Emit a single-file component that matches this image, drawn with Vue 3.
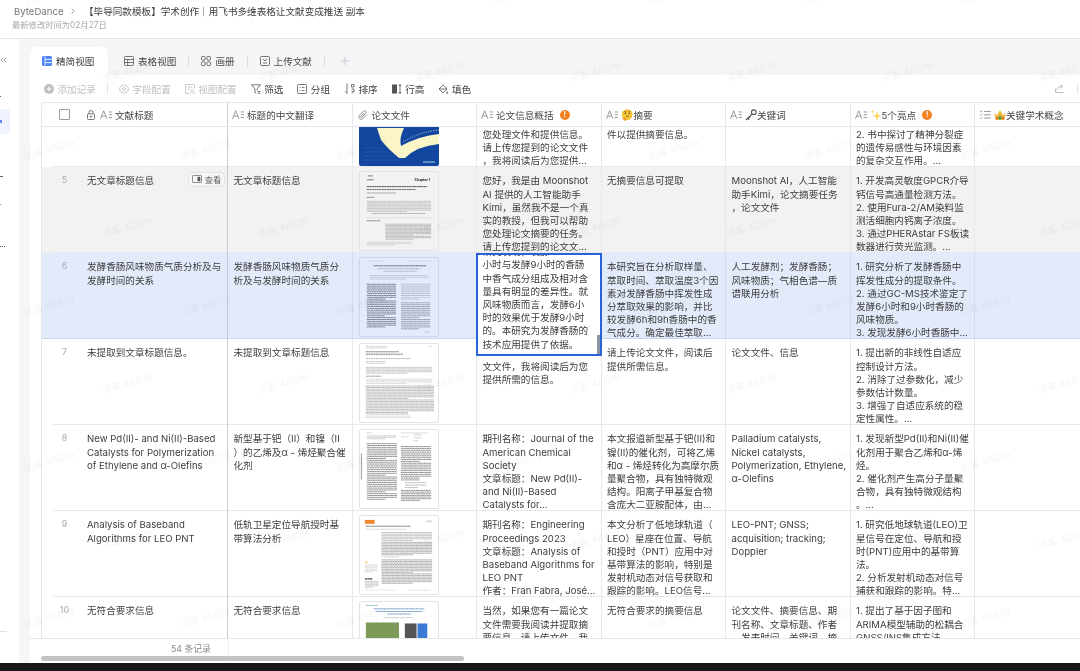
<script setup>
const marks = []
for (let r = 0; r < 9; r++) {
  const y = -7 + r * 78
  for (let x = r % 2 ? 127 : 49; x < 1120; x += 156) marks.push({ x, y })
}

const blocks = (list) => {
  const out = []
  list.forEach(([x, y, w, n, step, c, sw]) => {
    for (let i = 0; i < n; i++) {
      const short = n > 2 && (i === n - 1 || i % 9 === 8)
      out.push({ x1: x, x2: x + (short ? w * 0.62 : w), y: y + i * step, c, sw: sw * 0.85, off: (i * 1.37) % 2.6 })
    }
  })
  return out
}

const editorText = '研究发现，发酵6\n小时与发酵9小时的香肠\n中香气成分组成及相对含\n量具有明显的差异性。就\n风味物质而言，发酵6小\n时的效果优于发酵9小时\n的。本研究为发酵香肠的\n技术应用提供了依据。'

const rows = [
  { no: '', title: '', zh: '', kind: 'cover', info: '\n\n\n您处理文件和提供信息。\n请上传您提到的论文文件\n，我将阅读后为您提供...', abs: '\n\n\n件以提供摘要信息。', key: '', pts: '\n\n\n2. 书中探讨了精神分裂症\n的遗传易感性与环境因素\n的复杂交互作用。...', lines: [] },
  { no: 5, cls: 'hover', title: '无文章标题信息', zh: '无文章标题信息', kind: 'chapter', info: '您好，我是由 Moonshot\nAI 提供的人工智能助手\nKimi，虽然我不是一个真\n实的教授，但我可以帮助\n您处理论文摘要的任务。\n请上传您提到的论文文...', abs: '无摘要信息可提取', key: 'Moonshot AI，人工智能\n助手Kimi，论文摘要任务\n，论文文件', pts: '1. 开发高灵敏度GPCR介导\n钙信号高通量检测方法。\n2. 使用Fura-2/AM染料监\n测活细胞内钙离子浓度。\n3. 通过PHERAstar FS板读\n数器进行荧光监测。...',
    lines: blocks([[7, 15, 62, 1, 1.8, '#222', 1.1], [7, 18, 50, 1, 1.8, '#333', 1], [7, 21.5, 30, 1, 1.8, '#555', .7], [7, 26, 8, 1, 1.8, '#333', .8], [7, 30, 66, 8, 1.5, '#8a8a8a', .65], [12, 42.5, 55, 1, 1.8, '#555', .6], [7, 47, 66, 1, 1.8, '#aaa', .4], [7, 50, 14, 1, 1.8, '#333', .8], [26, 53.5, 47, 12, 1.4, '#777', .65], [7, 72, 46, 3, 1.4, '#99a', .5]]) },
  { no: 6, cls: 'sel', title: '发酵香肠风味物质气质分析及与\n发酵时间的关系', zh: '发酵香肠风味物质气质分\n析及与发酵时间的关系', kind: 'paper', active: true, info: '', abs: '本研究旨在分析取样量、\n萃取时间、萃取温度3个因\n素对发酵香肠中挥发性成\n分萃取效果的影响，并比\n较发酵6h和9h香肠中的香\n气成分。确定最佳萃取...', key: '人工发酵剂；发酵香肠；\n风味物质；气相色谱—质\n谱联用分析', pts: '1. 研究分析了发酵香肠中\n挥发性成分的提取条件。\n2. 通过GC-MS技术鉴定了\n发酵6小时和9小时香肠的\n风味物质。\n3. 发现发酵6小时香肠中...',
    lines: blocks([[8, 3, 16, 1, 1, '#aab', .5], [50, 3, 24, 1, 1, '#aab', .5], [14, 8, 54, 1, 1, '#334', 1], [18, 11, 44, 1, 1, '#667', .6], [24, 13.5, 34, 1, 1, '#667', .6], [10, 18, 60, 3, 1.8, '#889', .55], [7, 27, 30, 24, 1.9, '#334', .85], [42, 27, 30, 9, 1.9, '#778', .6], [42, 46, 30, 15, 1.9, '#556', .75], [66, 76, 6, 1, 1, '#889', .5]]) },
  { no: 7, title: '未提取到文章标题信息。', zh: '未提取到文章标题信息', kind: 'article', info: '\n文文件，我将阅读后为您\n提供所需的信息。', abs: '请上传论文文件，阅读后\n提供所需信息。', key: '论文文件、信息', pts: '1. 提出新的非线性自适应\n控制设计方法。\n2. 消除了过参数化，减少\n参数估计数量。\n3. 增强了自适应系统的稳\n定性属性。...',
    lines: blocks([[6, 2.5, 22, 2, 1.6, '#888', .5], [70, 2.5, 4, 1, 1, '#888', .5], [6, 8, 34, 1, 1, '#333', .9], [6, 10.5, 38, 1, 1, '#333', .9], [6, 15, 46, 1, 1, '#666', .6], [6, 18, 20, 2, 1.7, '#777', .5], [6, 24, 68, 5, 1.5, '#777', .6], [6, 33, 16, 1, 1, '#333', .7], [6, 36, 68, 4, 1.5, '#999', .5], [6, 43, 70, 19, 1.6, '#666', .65], [6, 74, 46, 2, 1.5, '#999', .5]]) },
  { no: 8, title: 'New Pd(II)- and Ni(II)-Based\nCatalysts for Polymerization\nof Ethylene and α-Olefins', zh: '新型基于钯（II）和镍（II\n）的乙烯及α - 烯烃聚合催\n化剂', kind: 'chem', info: '期刊名称：Journal of the\nAmerican Chemical\nSociety\n文章标题：New Pd(II)-\nand Ni(II)-Based\nCatalysts for...', abs: '本文报道新型基于钯(II)和\n镍(II)的催化剂，可将乙烯\n和α - 烯烃转化为高摩尔质\n量聚合物，具有独特微观\n结构。阳离子甲基复合物\n含庞大二亚胺配体，由...', key: 'Palladium catalysts,\nNickel catalysts,\nPolymerization, Ethylene,\nα-Olefins', pts: '1. 发现新型Pd(II)和Ni(II)催\n化剂用于聚合乙烯和α-烯\n烃。\n2. 催化剂产生高分子量聚\n合物，具有独特微观结构\n。...',
    lines: blocks([[7, 3, 5, 1, 1, '#777', .5], [42, 3, 28, 1, 1, '#888', .5], [7, 6, 30, 3, 1.5, '#777', .55], [7, 14, 31, 31, 1.9, '#444', .85], [42, 17, 31, 19, 1.9, '#444', .85], [42, 62, 31, 7, 1.7, '#444', .8], [42, 7, 8, 1, 1, '#888', .5], [55, 5, 8, 3, 3, '#888', .6], [46, 54, 22, 3, 2.5, '#777', .7]]) },
  { no: 9, title: 'Analysis of Baseband\nAlgorithms for LEO PNT', zh: '低轨卫星定位导航授时基\n带算法分析', kind: 'proc', info: '期刊名称：Engineering\nProceedings 2023\n文章标题：Analysis of\nBaseband Algorithms for\nLEO PNT\n作者：Fran Fabra, José...', abs: '本文分析了低地球轨道（\nLEO）星座在位置、导航\n和授时（PNT）应用中对\n基带算法的影响，特别是\n发射机动态对信号获取和\n跟踪的影响。LEO信号...', key: 'LEO-PNT; GNSS;\nacquisition; tracking;\nDoppler', pts: '1. 研究低地球轨道(LEO)卫\n星信号在定位、导航和授\n时(PNT)应用中的基带算\n法。\n2. 分析发射机动态对信号\n捕获和跟踪的影响。特...',
    lines: blocks([[68, 5, 6, 2, 1, '#99a', .6], [6, 10.5, 46, 1, 1, '#333', .9], [6, 13.5, 42, 1, 1, '#888', .5], [22, 17, 52, 6, 1.6, '#666', .6], [22, 27, 52, 9, 1.6, '#555', .7], [22, 42, 18, 1, 1, '#888', .5], [22, 45, 52, 16, 1.6, '#555', .7], [5, 50, 13, 6, 1.5, '#999', .5], [5, 64.5, 8, 1, 1, '#222', 1.6], [5, 67, 14, 5, 1.5, '#777', .6], [6, 76, 30, 1, 1, '#aaa', .5], [50, 76, 22, 1, 1, '#aaa', .5]]) },
  { no: 10, title: '无符合要求信息', zh: '无符合要求信息', kind: 'loose', info: '当然，如果您有一篇论文\n文件需要我阅读并提取摘\n要信息，请上传文件，我', abs: '无符合要求的摘要信息', key: '论文文件、摘要信息、期\n刊名称、文章标题、作者\n、发表时间、关键词、摘', pts: '1. 提出了基于因子图和\nARIMA模型辅助的松耦合\nGNSS/INS集成方法',
    lines: blocks([[6, 3.5, 12, 1, 1, '#3a9a7a', .8], [14, 7, 52, 1, 1, '#3f78b8', 1], [16, 9.7, 48, 1, 1, '#3f78b8', 1], [28, 12.3, 24, 1, 1, '#3f78b8', 1], [24, 16, 30, 1, 1, '#888', .6]]) },
]
</script>

<template>
  <div class="page">
    <header class="top">
      <div class="crumb">
        <span class="org">ByteDance</span>
        <svg class="chev" viewBox="0 0 4 6"><path d="M.7.6 3.2 3 .7 5.4" /></svg>
        <span class="doc">【毕导同款模板】学术创作｜用飞书多维表格让文献变成推送 副本</span>
      </div>
      <div class="sub">最新修改时间为02月27日</div>
    </header>

    <div class="body">
      <aside class="rail">
        <svg class="rail-back" viewBox="0 0 7 6"><path d="M3.2.6.8 3l2.4 2.4M6.4.6 4 3l2.4 2.4" /></svg>
        <i class="rail-dot d1"></i>
        <div class="rail-on"><i></i></div>
        <i class="rail-dot d2"></i>
        <i class="rail-dot d3"></i>
        <i class="rail-dot d4"></i>
        <i class="rail-line"></i>
      </aside>
      <div class="gutter"></div>

      <main class="main">
        <nav class="tabs">
          <div class="tab active">
            <svg class="ic" viewBox="0 0 10 10"><rect x="0" y="0" width="10" height="10" rx="1.5" fill="#4e83fd" /><path d="M3 .5v9M3.6 3.4h6M3.6 6.6h6" stroke="#fff" stroke-width=".9" fill="none" /></svg>
            <span>精简视图</span>
          </div>
          <div class="tab first">
            <svg class="ic line" viewBox="0 0 10 10"><rect x=".5" y=".5" width="9" height="9" rx="1" /><path d="M.5 3.5h9M.5 6.5h9M3.7 3.5v6" /></svg>
            <span>表格视图</span>
          </div>
          <i class="vbar"></i>
          <div class="tab">
            <svg class="ic line" viewBox="0 0 10 10"><rect x=".5" y=".5" width="3.6" height="3.6" rx=".8" /><rect x="5.9" y=".5" width="3.6" height="3.6" rx=".8" /><rect x=".5" y="5.9" width="3.6" height="3.6" rx=".8" /><rect x="5.9" y="5.9" width="3.6" height="3.6" rx=".8" /></svg>
            <span>画册</span>
          </div>
          <i class="vbar"></i>
          <div class="tab">
            <svg class="ic line" viewBox="0 0 10 10"><rect x=".5" y=".5" width="9" height="9" rx="1" /><path d="M3 3l2 2 2-2M3 7h4" /></svg>
            <span>上传文献</span>
          </div>
          <i class="vbar"></i>
          <svg class="plus" viewBox="0 0 9 9"><path d="M4.5 0v9M0 4.5h9" /></svg>
        </nav>

        <div class="toolbar">
          <div class="tool off">
            <svg class="ic" viewBox="0 0 10 10"><circle cx="5" cy="5" r="5" fill="#bcbfc4" /><path d="M5 2.5v5M2.5 5h5" stroke="#fff" stroke-width="1" /></svg>
            <span>添加记录</span>
          </div>
          <i class="tbar"></i>
          <div class="tool off">
            <svg class="ic line" viewBox="0 0 10 10"><path d="M5 .5l1 1.2 1.6-.3.5 1.5 1.4.8-.5 1.3.5 1.3-1.4.8-.5 1.5L6 8.3 5 9.5 4 8.3l-1.6.3-.5-1.5L.5 6.3 1 5 .5 3.700l1.400-.8.5-1.500L4 1.700z" /><circle cx="5" cy="5" r="1.500" /></svg>
            <span>字段配置</span>
          </div>
          <div class="tool off">
            <svg class="ic line" viewBox="0 0 10 10"><path d="M9.500 4.500v-4h-9v9h4M2.500 3h5M2.500 5.200h2.500" /><circle cx="7.500" cy="7.500" r="1.500" /><path d="M8.600 8.600 9.700 9.700" /></svg>
            <span>视图配置</span>
          </div>
          <div class="tool">
            <svg class="ic line" viewBox="0 0 10 10"><path d="M.5.800h9L6 5v1.200M.5.800 4 5v4l1-.6M6.500 7.500h3M6.500 9.200h3" /></svg>
            <span>筛选</span>
          </div>
          <div class="tool">
            <svg class="ic line" viewBox="0 0 10 10"><rect x=".5" y=".5" width="9" height="9" rx="1" /><path d="M2.500 3.500h1M5 3.500h2.500M2.500 6.500h1M5 6.500h2.500" /></svg>
            <span>分组</span>
          </div>
          <div class="tool">
            <svg class="ic wide line" viewBox="0 0 11 11"><path d="M3 .5v10M3 10.500 1 8.500M7.500 1.500h2.500v2.500h-2.500zM7.500 6h2.500v2.500l-2 2M7.500 8.500h2.500" /></svg>
            <span>排序</span>
          </div>
          <div class="tool">
            <svg class="ic line" viewBox="0 0 10 10"><rect x="0" y=".5" width="5" height="9" fill="#555" stroke="none" /><path d="M8 .5v9M6.600 2 8 .5 9.400 2M6.600 8 8 9.500 9.400 8" /></svg>
            <span>行高</span>
          </div>
          <div class="tool">
            <svg class="ic line" viewBox="0 0 10 10"><path d="M5 .8 9 5 5 8.800 1 5zM1 5h8" /><path d="M9.300 7.500q-.7 1-.7 1.400a.7.7 0 0 0 1.400 0q0-.4-.7-1.400z" /></svg>
            <span>填色</span>
          </div>
          <div class="tool-end">
            <svg class="share" viewBox="0 0 9 9"><path d="M.5 4.500v4h8M1.800 6.200C2.200 3.500 4 2.500 6.500 2.500M5.200.5l2.500 2L5.200 4.500" /></svg>
            <i class="tbar"></i>
          </div>
        </div>

        <section class="table">
          <div class="thead grid">
            <div class="th frozen">
              <i class="check"></i>
              <svg class="lock" viewBox="0 0 8 10"><rect x=".5" y="3.800" width="7" height="5.700" rx="1" /><path d="M2 3.800V2.500a2 2 0 0 1 4 0v1.300" /><circle cx="4" cy="6.600" r=".7" /></svg>
              <svg class="ta" viewBox="0 0 13 10"><path d="M.5 9.500 4 .7l3.500 8.800M1.700 6.500h4.600M9.500 2H13M9.500 5H13M9.500 8H13" /></svg>
              <span>文献标题</span>
            </div>
            <div class="th">
              <svg class="ta" viewBox="0 0 13 10"><path d="M.5 9.500 4 .7l3.500 8.800M1.700 6.500h4.600M9.500 2H13M9.500 5H13M9.500 8H13" /></svg>
              <span>标题的中文翻译</span>
            </div>
            <div class="th">
              <svg class="ta clip" viewBox="0 0 10 10"><path d="M8.800 4.700 4.900 8.600a2.400 2.400 0 0 1-3.400-3.400l4-4a1.500 1.500 0 0 1 2.200 2.200l-3.900 3.900a.6.6 0 0 1-.9-.9l3.500-3.500" /></svg>
              <span>论文文件</span>
            </div>
            <div class="th">
              <svg class="ta" viewBox="0 0 13 10"><path d="M.5 9.500 4 .7l3.500 8.800M1.700 6.500h4.600M9.500 2H13M9.500 5H13M9.500 8H13" /></svg>
              <span>论文信息概括</span>
              <i class="warn">!</i>
            </div>
            <div class="th">
              <svg class="ta" viewBox="0 0 13 10"><path d="M.5 9.500 4 .7l3.500 8.800M1.700 6.500h4.600M9.500 2H13M9.500 5H13M9.500 8H13" /></svg>
              <svg class="emoji" viewBox="0 0 12 12"><circle cx="6.200" cy="5.600" r="5.400" fill="#f8c438" /><circle cx="4.300" cy="4.300" r=".8" fill="#5b3a12" /><circle cx="8.200" cy="4.300" r=".8" fill="#5b3a12" /><path d="M3.500 2.600l1.600-.5M7.400 2.100l1.700.5M5 7.500l3-.5" stroke="#5b3a12" stroke-width=".6" fill="none" /><path d="M1.500 9.200 5.200 8.800 5 11.600 2.800 11.800z" fill="#e99a22" /></svg>
              <span>摘要</span>
            </div>
            <div class="th">
              <svg class="ta" viewBox="0 0 13 10"><path d="M.5 9.500 4 .7l3.500 8.800M1.700 6.500h4.600M9.500 2H13M9.500 5H13M9.500 8H13" /></svg>
              <svg class="emoji tight" viewBox="0 0 12 12"><circle cx="8.800" cy="3.200" r="2.300" fill="none" stroke="#555" stroke-width="1.100" /><path d="M7.200 4.800 1 11M2.800 9.200l1.400 1.400M4.300 7.700l1 1" stroke="#444" stroke-width="1.100" fill="none" /></svg>
              <span>关键词</span>
            </div>
            <div class="th">
              <svg class="ta" viewBox="0 0 13 10"><path d="M.5 9.500 4 .7l3.500 8.800M1.700 6.500h4.600M9.500 2H13M9.500 5H13M9.500 8H13" /></svg>
              <svg class="emoji tight" viewBox="0 0 12 12"><path d="M7 2 8.200 6 11.800 7 8.200 8 7 12 5.800 8 2.200 7 5.800 6z" fill="#fbd662" /><path d="M2.500 .5 3 2.200 4.700 2.700 3 3.200 2.500 4.900 2 3.200.3 2.700 2 2.200z" fill="#fbd662" /></svg>
              <span>5个亮点</span>
              <i class="warn">!</i>
            </div>
            <div class="th last">
              <svg class="ta list" viewBox="0 0 11 10"><path d="M0 1.500l.8.600L2 .8M0 5l.8.600L2 4.300M0 8.500l.8.600L2 7.800M4 1.500h7M4 5h7M4 8.500h7" /></svg>
              <svg class="emoji tight" viewBox="0 0 12 12"><path d="M.5 4 3 6.500 6 1l3 5.500L11.500 4 10.500 11h-9z" fill="#eeb32f" /><circle cx="6" cy="8.800" r="1.600" fill="#2e9a5c" /><circle cx="3" cy="9.200" r=".9" fill="#d9483b" /><circle cx="9" cy="9.200" r=".9" fill="#d9483b" /></svg>
              <span>关键学术概念</span>
            </div>
          </div>

          <div class="tbody">
            <div v-for="(r, i) in rows" :key="i" class="row grid" :class="r.cls">
              <div class="td frozen lead">
                <span class="no">{{ r.no }}</span>
                <span class="txt">{{ r.title }}</span>
                <div v-if="r.cls === 'hover'" class="peek">
                  <svg viewBox="0 0 10 8"><rect x=".4" y=".4" width="9.200" height="7.200" rx="1" fill="none" stroke="#666" stroke-width=".8" /><rect x="5.500" y="1.800" width="2.800" height="4.400" fill="#555" /></svg>
                  <span>查看</span>
                </div>
              </div>
              <div class="td"><span class="txt">{{ r.zh }}</span></div>
              <div class="td thumbcell">
                <svg class="thumb" :class="{ full: r.kind === 'cover' }" viewBox="0 0 80 80">
                  <template v-if="r.kind === 'cover'">
                    <rect width="80" height="80" fill="#13479f" />
                    <path d="M18 42H45Q40 52 42 60 60 50 80 48V58Q58 60 46 72H40Q28 62 22 54Z" fill="#fbf6c8" />
                    <path d="M44 56Q60 46 80 44" fill="none" stroke="#fff" stroke-width=".8" stroke-dasharray="1 1.500" />
                    <path d="M4 62h20M4 66h26M4 70h32M4 74h40" stroke="#3c6dbc" stroke-width=".7" stroke-dasharray="1 1" />
                    <path d="M64 76h12" stroke="#cfe" stroke-width=".8" />
                  </template>
                  <template v-if="r.kind === 'chapter'">
                    <path d="M8 4h5M7 8h7" stroke="#777" stroke-width="1" />
                    <text x="56" y="9" class="chap">Chapter 1</text>
                  </template>
                  <template v-if="r.kind === 'chem'">
                    <path d="M1.500 24v27" stroke="#aaa" stroke-width="1.200" />
                  </template>
                  <template v-if="r.kind === 'proc'">
                    <rect x="5" y="4" width="10" height="4" fill="#ee8a2c" />
                    <circle cx="6.500" cy="47.500" r="1" fill="#f2c83c" />
                  </template>
                  <template v-if="r.kind === 'loose'">
                    <rect x="6" y="21" width="34" height="17" fill="#7d9a58" />
                    <rect x="46" y="22" width="12" height="15" fill="#555" />
                    <rect x="59" y="22" width="10" height="15" fill="#3d7ad6" />
                  </template>
                  <line v-for="(l, j) in r.lines" :key="j" :x1="l.x1" :x2="l.x2" :y1="l.y" :y2="l.y" :stroke="l.c" :stroke-width="l.sw" :stroke-dashoffset="l.off" />
                </svg>
              </div>
              <div class="td">
                <span class="txt">{{ r.info }}</span>
                <div v-if="r.active" class="editor">
                  <div class="editor-text">{{ editorText }}</div>
                  <i class="editor-bar"></i>
                </div>
              </div>
              <div class="td"><span class="txt">{{ r.abs }}</span></div>
              <div class="td"><span class="txt">{{ r.key }}</span></div>
              <div class="td"><span class="txt">{{ r.pts }}</span></div>
              <div class="td last"></div>
            </div>
          </div>
        </section>

        <footer class="foot">
          <div class="count">54 条记录</div>
          <div class="hbar"></div>
        </footer>
      </main>
    </div>

    <div class="dock"></div>

    <div class="marks">
      <span v-for="(m, i) in marks" :key="i" class="mark" :style="{ left: m.x + 'px', top: m.y + 'px' }">访客 46679</span>
    </div>
  </div>
</template>

<style scoped>
.page {
  position: relative;
  width: 1080px;
  height: 671px;
  overflow: hidden;
  display: flex;
  flex-direction: column;
  background: #fff;
  font-family: Inter, "Noto Sans CJK SC", "Noto Sans", sans-serif;
  font-size: 9.6px;
  color: #3d3d3d;
  filter: blur(0.3px);
}
.top {
  height: 39px;
  flex: none;
  box-sizing: border-box;
  border-bottom: 1px solid #e4e6ea;
  padding: 4px 0 0 12px;
}
.crumb {
  display: flex;
  align-items: center;
  height: 14px;
  padding-left: 2px;
}
.org { color: #777; width: 57px; }
.chev { width: 4px; height: 6px; fill: none; stroke: #888; stroke-width: .8; margin-right: 9px; }
.doc { color: #3d3d3d; }
.sub { margin-top: 1px; font-size: 8.3px; line-height: 12px; color: #a8a8a8; }

.body { flex: 1; min-height: 0; display: flex; }
.rail {
  width: 19px;
  flex: none;
  display: flex;
  flex-direction: column;
  align-items: flex-start;
  background: #fff;
}
.rail-back { width: 7px; height: 6px; margin: 18px 0 0 0; fill: none; stroke: #777; stroke-width: .7; }
.rail-dot { display: block; height: 1px; background: #666; }
.d1 { width: 1px; margin-top: 33px; }
.rail-on {
  width: 10px;
  height: 25px;
  margin-top: 12px;
  background: #eef3fe;
  border-radius: 0 3px 3px 0;
  display: flex;
  align-items: center;
}
.rail-on i { width: 1.5px; height: 3px; background: #5b8cf5; }
.d2 { width: 3px; margin-top: 42px; }
.d3 { width: 1px; margin-top: 27px; background: #999; }
.d4 { width: 6px; margin-top: 41px; background: repeating-linear-gradient(90deg, #555 0 1px, transparent 1px 2px); }
.rail-line { width: 7px; height: 1px; margin-top: 384px; background: #ddd; }
.gutter { width: 11px; flex: none; background: #f5f6f8; }

.main { flex: 1; min-width: 0; display: flex; flex-direction: column; }
.tabs {
  height: 36px;
  flex: none;
  box-sizing: border-box;
  padding-top: 8px;
  background: #f4f5f7;
  display: flex;
  align-items: center;
  gap: 12px;
}
.tab { height: 28px; display: flex; align-items: center; gap: 4px; color: #4a4a4a; }
.tab.active {
  width: 78px;
  box-sizing: border-box;
  padding-left: 12px;
  background: #fff;
  border-radius: 6px 6px 0 0;
  color: #3d3d3d;
}
.tab.first { margin-left: 4px; }
.vbar { width: 1px; height: 12px; background: #dcdee2; }
.plus { width: 8px; height: 8px; margin-left: 4px; stroke: #c4c6ca; stroke-width: 1; fill: none; }
.ic { width: 10px; height: 10px; flex: none; }
.ic.wide { width: 11px; height: 11px; }
.line { fill: none; stroke: #555; stroke-width: .8; }

.toolbar {
  height: 27px;
  flex: none;
  box-sizing: border-box;
  padding-left: 14px;
  background: #fff;
  display: flex;
  align-items: center;
  gap: 14px;
}
.tool { display: flex; align-items: center; gap: 3.5px; color: #444; }
.tool.off { color: #bcbfc4; }
.tool.off .line { stroke: #bcbfc4; }
.tbar { width: 1px; height: 11px; background: #e2e3e6; margin: 0 -3px; }
.tool-end { margin-left: auto; display: flex; align-items: center; gap: 16px; padding-right: 5px; }
.share { width: 9px; height: 9px; fill: none; stroke: #a9acb1; stroke-width: .8; }

.table {
  flex: 1;
  min-height: 0;
  margin-left: 11px;
  display: flex;
  flex-direction: column;
  border-top: 1px solid #e6e8eb;
  border-left: 1px solid #e6e8eb;
  border-top-left-radius: 4px;
  overflow: hidden;
}
.grid { display: grid; grid-template-columns: 186px repeat(6, 124.5px) 105px; }
.thead { height: 24.3px; flex: none; box-sizing: border-box; border-bottom: 1px solid #e6e8eb; }
.th {
  display: flex;
  align-items: center;
  padding-left: 4px;
  border-right: 1px solid #e6e8eb;
  color: #444;
  white-space: nowrap;
  min-width: 0;
}
.th.frozen { padding-left: 17px; }
.th.last { border-right: 0; padding-left: 5px; }
.frozen { border-right: 1.5px solid #c8cbd1 !important; }
.check { width: 9px; height: 9px; border: 1px solid #9a9da3; border-radius: 1px; flex: none; margin-right: 17px; }
.lock { width: 8px; height: 10px; fill: none; stroke: #555; stroke-width: .8; margin-right: 5px; flex: none; }
.ta { width: 12px; height: 9.500px; fill: none; stroke: #77797e; stroke-width: .8; margin-right: 3px; flex: none; }
.ta.clip { width: 10px; height: 10px; margin: 0 4px 0 1px; }
.ta.list { width: 11px; margin-right: 3px; margin-left: 0; }
.warn {
  width: 10px;
  height: 10px;
  margin-left: 6px;
  border-radius: 50%;
  background: #f5801f;
  color: #fff;
  font-size: 7px;
  font-style: normal;
  font-weight: 700;
  line-height: 10px;
  text-align: center;
  flex: none;
}
.emoji { width: 12px; height: 12px; margin-right: 1px; flex: none; }
.emoji.tight { margin-right: 0; }

.tbody { flex: 1; min-height: 0; overflow: hidden; }
.row { height: 86px; }
.row:first-child { margin-top: -46px; }
.row.hover { background: #f2f2f2; }
.row.sel { background: #e3ebfb; }
.td {
  position: relative;
  box-sizing: border-box;
  height: 86px;
  padding: 7px 0 0 5.500px;
  border-right: 1px solid #e6e8eb;
  border-bottom: 1px solid #e6e8eb;
  min-width: 0;
}
.row.sel .td { border-bottom-color: #c9d6f0; border-right-color: #d3dcee; }
.td.last { border-right: 0; }
.txt {
  display: block;
  line-height: 13.200px;
  white-space: pre;
  color: #3d3d3d;
}
.lead {
  display: flex;
  padding-left: 0;
  border-bottom: 0;
}
.lead::after {
  content: "";
  position: absolute;
  left: 11px;
  right: 0;
  bottom: 0;
  height: 1px;
  background: #e6e8eb;
}
.row.sel .lead { border-bottom: 1px solid #c9d6f0; }
.row.sel .lead::after { display: none; }
.no {
  width: 45px;
  flex: none;
  text-align: center;
  font-size: 9px;
  line-height: 11px;
  color: #a9abb0;
}
.peek {
  position: absolute;
  top: 4.500px;
  right: 2px;
  width: 37px;
  height: 15px;
  box-sizing: border-box;
  border: 1px solid #e3e3e3;
  border-radius: 4px;
  background: #f6f6f6;
  display: flex;
  align-items: center;
  justify-content: center;
  gap: 3px;
  font-size: 8.400px;
  color: #666;
}
.peek svg { width: 10px; height: 8px; }
.thumbcell { padding: 3.500px 0 0 6px; }
.thumb {
  display: block;
  width: 80px;
  height: 80px;
  box-sizing: border-box;
  border: 1px solid #e2e3e5;
  border-radius: 2px;
}
.thumb line { stroke-dasharray: 2.2 .35; opacity: .85; }
.row.sel .thumb { border-color: #ccd6ea; }
.thumb.full { border: 0; margin-top: 1px; }
.chap { font-size: 3.500px; font-weight: 700; fill: #222; }

.editor {
  position: absolute;
  top: 0;
  left: -1px;
  width: 126px;
  height: 103px;
  box-sizing: border-box;
  border: 2px solid #2a62d8;
  background: #fff;
  overflow: hidden;
  z-index: 3;
}
.editor-text {
  margin: -10.100px 0 0 4.500px;
  line-height: 13.200px;
  white-space: pre;
  color: #3d3d3d;
}
.editor-bar {
  position: absolute;
  right: 0;
  bottom: 0;
  width: 3px;
  height: 19px;
  background: #8c94a4;
}

.foot {
  height: 25px;
  flex: none;
  box-sizing: border-box;
  border-top: 1px solid #e6e8eb;
  background: linear-gradient(#efeff1, #efeff1) 198px 0 / 1px 100% no-repeat #fff;
}
.count { margin: 4px 0 0 141px; line-height: 12px; font-size: 8.800px; color: #888; }
.hbar { width: 423px; height: 5px; margin: 1px 0 0 11px; border-radius: 3px; background: #c4c4c6; }

.dock { height: 8px; flex: none; background: #17171c; }

.marks { position: absolute; inset: 0; pointer-events: none; z-index: 10; overflow: hidden; }
.mark {
  position: absolute;
  transform: translate(-50%, -50%) rotate(-15deg);
  font-size: 9.600px;
  color: rgba(0, 0, 0, .05);
  white-space: nowrap;
}
</style>
